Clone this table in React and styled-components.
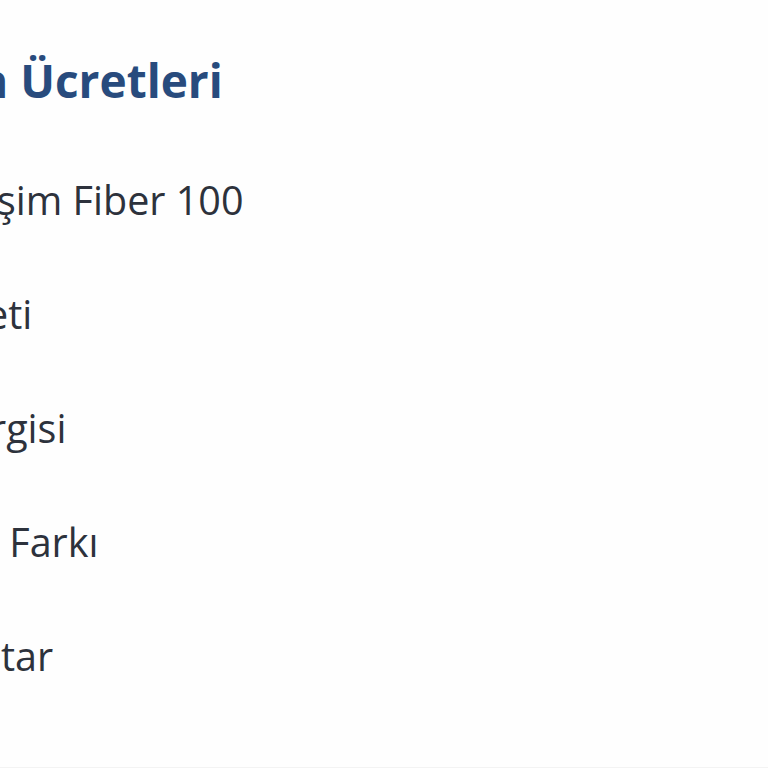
import styled, { createGlobalStyle } from 'styled-components';

const GlobalStyle = createGlobalStyle`
  html, body {
    margin: 0;
    padding: 0;
    background: #fefefe;
  }
  body {
    font-family: "Open Sans", "Noto Sans", sans-serif;
  }
`;

const Page = styled.div`
  height: 767px;
  border-bottom: 1px solid #f3f3f3;
  overflow: hidden;
  box-sizing: content-box;
`;

const Panel = styled.section`
  display: flex;
  flex-direction: column;
  padding-top: 50px;
  margin-left: -3px;
`;

const Title = styled.h2`
  margin: 0 0 32px;
  font-size: 46px;
  line-height: 61px;
  font-weight: 700;
  color: #284b7d;
  white-space: nowrap;
  margin-left: ${p => p.$shift || 0}px;
`;

const List = styled.ul`
  list-style: none;
  margin: 0;
  padding: 0;
  display: flex;
  flex-direction: column;
`;

// each label is the tail of a longer name that runs off the left edge
const Item = styled.li`
  font-size: 39.5px;
  line-height: 114px;
  font-weight: 400;
  color: #2d323c;
  white-space: pre;
  margin-left: ${p => p.$shift || 0}px;
`;

const items = [
  { label: 'şim Fiber 100' },
  { label: 'eti', shift: -11 },
  { label: 'rgisi', shift: -7 },
  { label: '\u00a0Farkı', shift: 2 },
  { label: 'tar', shift: 4 },
];

export default function App() {
  return (
    <>
      <GlobalStyle />
      <Page>
        <Panel>
          <Title $shift={-19}>n Ücretleri</Title>
          <List>
            {items.map(it => (
              <Item key={it.label} $shift={it.shift}>{it.label}</Item>
            ))}
          </List>
        </Panel>
      </Page>
    </>
  );
}
